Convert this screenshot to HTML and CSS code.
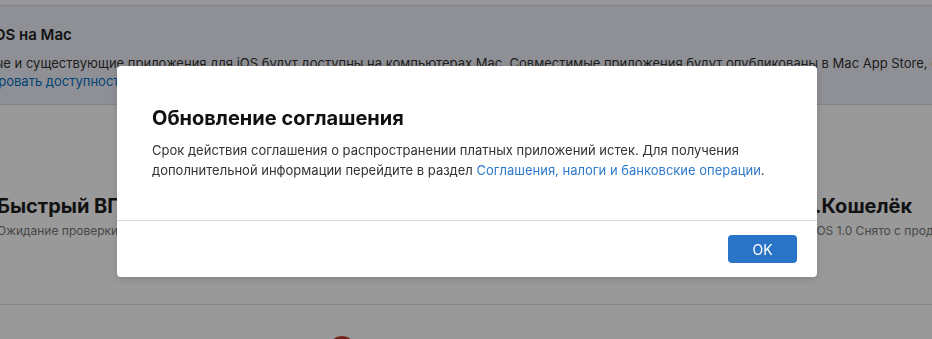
FILE: index.html
```html
<!DOCTYPE html>
<html lang="ru">
<head>
<meta charset="utf-8">
<link rel="stylesheet" href="styles.css">
</head>
<body>
<div class="page">
  <div class="topband"></div>
  <section class="mac-card">
    <h2 class="mac-title">iOS на Mac</h2>
    <p class="mac-desc">Новые и существующие приложения для iOS будут доступны на компьютерах Mac. Совместимые приложения будут опубликованы в Mac App Store, если</p>
    <a class="mac-link">Редактировать доступность</a>
  </section>
  <section class="apps">
    <div class="app">
      <div class="app-name">Быстрый ВПН</div>
      <div class="app-status">Ожидание проверки</div>
    </div>
    <div class="app">
      <div class="app-name">Погода</div>
      <div class="app-status">iOS 2.1 Готово к продаже</div>
    </div>
    <div class="app app-right">
      <div class="app-name">Яндекс.Кошелёк</div>
      <div class="app-status">macOS 1.0, iOS 1.0 Снято с продажи</div>
    </div>
  </section>
  <section class="apps2">
    <div class="icon-red"></div>
  </section>
</div>
<div class="overlay">
  <div class="modal">
    <div class="modal-body">
      <h1 class="modal-title">Обновление соглашения</h1>
      <p class="modal-text">Срок действия соглашения о распространении платных приложений истек. Для получения дополнительной информации перейдите в раздел <a class="modal-link">Соглашения, налоги и банковские операции</a>.</p>
    </div>
    <div class="modal-footer">
      <button class="ok-btn">OK</button>
    </div>
  </div>
</div>
</body>
</html>
```
FILE: styles.css
```css
html, body {
  margin: 0;
  padding: 0;
  width: 932px;
  height: 339px;
  overflow: hidden;
  background: #ffffff;
  font-family: Inter, "Liberation Sans", Arial, sans-serif;
  color: #1d1d1f;
}
.page {
  width: 932px;
  height: 339px;
  overflow: hidden;
}
.topband {
  height: 5px;
  background: #fafbfd;
  border-bottom: 1px solid #d8dbe6;
}
.mac-card {
  height: 99px;
  background: #eef0f8;
  border-bottom: 1px solid #d8dbe6;
  padding-top: 1px;
  box-sizing: border-box;
  white-space: nowrap;
  overflow: hidden;
}
.mac-title {
  margin: 18px 0 0 -10px;
  font-size: 15px;
  font-weight: 600;
  line-height: 20px;
}
.mac-desc {
  margin: 9px 0 0 -31px;
  font-size: 13px;
  line-height: 18px;
  color: #333;
}
.mac-link {
  display: block;
  margin-left: -54px;
  font-size: 13px;
  line-height: 18px;
  color: #0070c9;
}
.apps {
  height: 199px;
  display: flex;
  border-bottom: 1px solid #e2e2e2;
  white-space: nowrap;
  margin-left: -3px;
}
.app {
  flex: none;
  width: 376px;
  padding-top: 88px;
  overflow: hidden;
}
.app-right {
  margin-left: -8px;
}
.app-right .app-status {
  padding-left: 6px;
}
.app-name {
  font-size: 20px;
  font-weight: 700;
  line-height: 26px;
}
.app-status {
  margin-top: 4px;
  font-size: 12px;
  line-height: 16px;
  color: #777;
}
.apps2 {
  padding: 31px 0 0 328px;
}
.icon-red {
  width: 28px;
  height: 28px;
  border-radius: 50%;
  background: #c0392b;
}
.overlay {
  position: fixed;
  inset: 0;
  background: rgba(0, 0, 0, 0.4);
  display: flex;
  justify-content: flex-start;
  align-items: flex-start;
  padding: 66px 0 0 117px;
}
.modal {
  width: 700px;
  height: 211px;
  background: #ffffff;
  border-radius: 4px;
  display: flex;
  flex-direction: column;
  box-shadow: 0 2px 8px rgba(0,0,0,0.15);
}
.modal-body {
  padding: 38px 35px 0 35px;
  height: 155px;
  box-sizing: border-box;
  border-bottom: 1px solid #dcdcdc;
}
.modal-title {
  margin: 0;
  font-size: 20px;
  font-weight: 700;
  line-height: 28px;
  color: #111;
}
.modal-text {
  margin: 8px 0 0 0;
  font-size: 13px;
  line-height: 20px;
  color: #333;
  max-width: 630px;
}
.modal-link {
  color: #2f7bcb;
}
.modal-footer {
  display: flex;
  justify-content: flex-end;
  padding: 14px 20px 0 0;
}
.ok-btn {
  width: 69px;
  height: 28px;
  border: none;
  border-radius: 4px;
  background: #2a74c8;
  color: #fff;
  font-family: Inter, "Liberation Sans", Arial, sans-serif;
  font-size: 14px;
  padding: 0;
}
```
